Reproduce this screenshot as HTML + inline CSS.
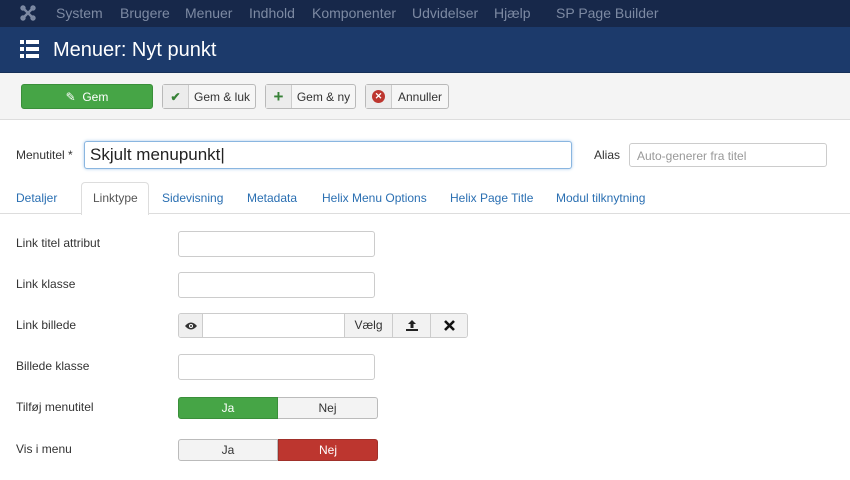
<!DOCTYPE html>
<html><head><meta charset="utf-8"><style>
*{box-sizing:border-box;margin:0;padding:0}
body{width:850px;height:480px;overflow:hidden;background:#fff;font-family:"Liberation Sans",sans-serif;font-size:12px;color:#333;position:relative}
.a{position:absolute}
.nav{left:0;top:0;width:850px;height:27px;background:#17284a}
.nav span{position:absolute;top:5px;font-size:14px;color:#7d8aa3}
.hdr{left:0;top:27px;width:850px;height:46px;background:#1c3a6b;border-bottom:1px solid #162f57}
.tb{left:0;top:73px;width:850px;height:47px;background:#f4f4f4;border-bottom:1px solid #ddd}
.btn{position:absolute;top:84px;height:25px;border:1px solid #b9b9b9;border-radius:3px;background:#f6f6f6;font-size:12px;color:#333;display:flex;align-items:center}
.btn .ic{width:26px;height:100%;border-right:1px solid #ccc;background:#ececec;display:flex;align-items:center;justify-content:center;font-weight:bold}
.btn .t{flex:1;text-align:center}
.inp{position:absolute;height:26px;border:1px solid #ccc;border-radius:3px;background:#fff}
.lbl{position:absolute;font-size:12px;color:#333}
.tab{position:absolute;top:191px;font-size:12px;color:#2a6fb2}
.seg{position:absolute;height:22px;border:1px solid #bbb;background:#f3f3f3;text-align:center;line-height:20px;font-size:12px}
</style></head><body>
<div class="a nav">
<svg class="a" style="left:20px;top:5px" width="16" height="16" viewBox="0 0 16 16"><g stroke="#7d8aa3" stroke-width="2.4" fill="none" stroke-linecap="round"><path d="M4 4L12 12M12 4L4 12"/><circle cx="3" cy="3" r="1.5"/><circle cx="13" cy="3" r="1.5"/><circle cx="3" cy="13" r="1.5"/><circle cx="13" cy="13" r="1.5"/></g></svg>
<span style="left:56px">System</span><span style="left:120px">Brugere</span><span style="left:185px">Menuer</span><span style="left:249px">Indhold</span><span style="left:312px">Komponenter</span><span style="left:412px">Udvidelser</span><span style="left:494px">Hjælp</span><span style="left:556px">SP Page Builder</span>
</div>
<div class="a hdr">
<svg class="a" style="left:20px;top:13px" width="19" height="18" viewBox="0 0 19 18" fill="#fff"><rect x="0" y="0" width="4" height="4"/><rect x="6" y="0" width="13" height="4"/><rect x="0" y="7" width="4" height="4"/><rect x="6" y="7" width="13" height="4"/><rect x="0" y="14" width="4" height="4"/><rect x="6" y="14" width="13" height="4"/></svg>
<div class="a" style="left:53px;top:12px;font-size:20px;color:#fff">Menuer: Nyt punkt</div>
</div>
<div class="a tb"></div>
<div class="btn" style="left:21px;width:132px;background:#46a546;border-color:#3a8f3a;color:#fff;justify-content:center">✎&nbsp; Gem</div>
<div class="btn" style="left:162px;width:94px"><div class="ic" style="color:#378137">✔</div><div class="t">Gem &amp; luk</div></div>
<div class="btn" style="left:265px;width:91px"><div class="ic" style="color:#378137;font-size:17px">+</div><div class="t">Gem &amp; ny</div></div>
<div class="btn" style="left:365px;width:84px"><div class="ic"><span style="display:inline-block;width:13px;height:13px;border-radius:50%;background:#bd362f;color:#fff;font-size:9px;line-height:13px;text-align:center">✕</span></div><div class="t">Annuller</div></div>

<div class="lbl" style="left:16px;top:148px">Menutitel *</div>
<div class="inp" style="left:84px;top:141px;width:488px;height:28px;border-color:#8ab6e0;box-shadow:0 0 3px #a8c8ea"><span class="a" style="left:5px;top:3px;font-size:17px;color:#222">Skjult menupunkt|</span></div>
<div class="lbl" style="left:594px;top:148px">Alias</div>
<div class="inp" style="left:629px;top:143px;width:198px;height:24px"><span class="a" style="left:7px;top:5px;color:#999;font-size:12px">Auto-generer fra titel</span></div>

<div class="a" style="left:0;top:213px;width:850px;height:1px;background:#ddd"></div>
<div class="a" style="left:81px;top:182px;width:68px;height:33px;border:1px solid #ddd;border-bottom:none;border-radius:4px 4px 0 0;background:#fff"></div>
<div class="tab" style="left:16px">Detaljer</div>
<div class="tab" style="left:93px;color:#555">Linktype</div>
<div class="tab" style="left:162px">Sidevisning</div>
<div class="tab" style="left:247px">Metadata</div>
<div class="tab" style="left:322px">Helix Menu Options</div>
<div class="tab" style="left:450px">Helix Page Title</div>
<div class="tab" style="left:556px">Modul tilknytning</div>

<div class="lbl" style="left:16px;top:236px">Link titel attribut</div>
<div class="inp" style="left:178px;top:231px;width:197px"></div>
<div class="lbl" style="left:16px;top:277px">Link klasse</div>
<div class="inp" style="left:178px;top:272px;width:197px"></div>
<div class="lbl" style="left:16px;top:318px">Link billede</div>
<div class="inp" style="left:178px;top:313px;width:290px;height:25px;overflow:hidden">
<div class="a" style="left:0;top:0;width:24px;height:23px;background:#efefef;border-right:1px solid #ccc"><svg class="a" style="left:6px;top:8px" width="12" height="8" viewBox="0 0 12 8"><path d="M0 4Q6 -3 12 4Q6 11 0 4Z" fill="#333"/><circle cx="6" cy="4" r="2" fill="#fff"/><circle cx="6" cy="4" r="1" fill="#333"/></svg></div>
<div class="a" style="left:165px;top:0;width:48px;height:23px;background:#f2f2f2;border-left:1px solid #ccc;text-align:center;line-height:23px">Vælg</div>
<div class="a" style="left:213px;top:0;width:38px;height:23px;background:#f2f2f2;border-left:1px solid #ccc"><svg class="a" style="left:13px;top:5px" width="12" height="12" viewBox="0 0 12 12"><path d="M6 1L2 5H4.5V9H7.5V5H10Z M0 10H12V12H0Z" fill="#222"/></svg></div>
<div class="a" style="left:251px;top:0;width:38px;height:23px;background:#f2f2f2;border-left:1px solid #ccc"><svg class="a" style="left:13px;top:6px" width="11" height="11" viewBox="0 0 11 11"><path d="M1 1L10 10M10 1L1 10" stroke="#111" stroke-width="2.6"/></svg></div>
</div>
<div class="lbl" style="left:16px;top:359px">Billede klasse</div>
<div class="inp" style="left:178px;top:354px;width:197px"></div>
<div class="lbl" style="left:16px;top:400px">Tilføj menutitel</div>
<div class="seg" style="left:178px;top:397px;width:100px;background:#46a546;border-color:#3a8f3a;color:#fff;border-radius:3px 0 0 3px">Ja</div>
<div class="seg" style="left:278px;top:397px;width:100px;border-left:none;border-radius:0 3px 3px 0">Nej</div>
<div class="lbl" style="left:16px;top:442px">Vis i menu</div>
<div class="seg" style="left:178px;top:439px;width:100px;border-radius:3px 0 0 3px">Ja</div>
<div class="seg" style="left:278px;top:439px;width:100px;background:#bd362f;border-color:#a0302a;color:#fff;border-radius:0 3px 3px 0">Nej</div>
</body></html>
